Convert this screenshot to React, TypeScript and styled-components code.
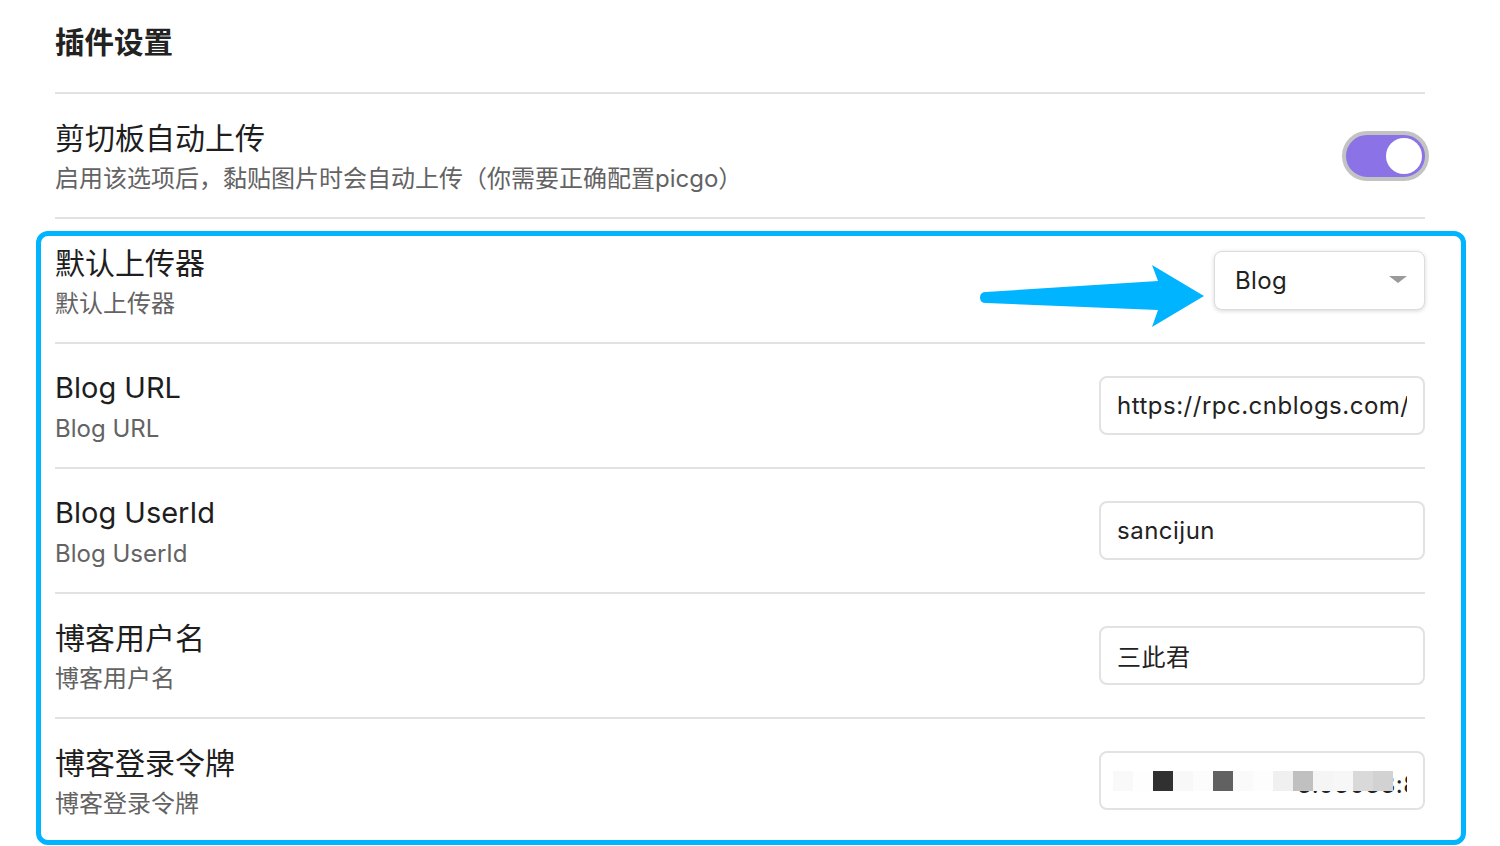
import React from "react";
import styled, { createGlobalStyle } from "styled-components";

const GlobalStyle = createGlobalStyle`
  html, body { margin: 0; padding: 0; background: #ffffff; }
  body {
    font-family: Inter, "Noto Sans CJK SC", "Noto Sans", sans-serif;
    color: #1f1f1f;
  }
  * { box-sizing: border-box; }
`;

const Page = styled.div`
  position: relative;
  width: 1500px;
  height: 846px;
  overflow: hidden;
  padding: 0 75px 0 55px;
`;

const Header = styled.div`
  height: 92px;
  display: flex;
  align-items: center;
  padding-bottom: 8px;
`;

const PageTitle = styled.h1`
  margin: 0;
  font-size: 29.5px;
  font-weight: 700;
  color: #222222;
  line-height: 40px;
`;

const Row = styled.div`
  height: 125px;
  border-top: 2px solid #e2e2e2;
  display: flex;
  align-items: center;
  justify-content: space-between;
`;

const Info = styled.div`
  display: flex;
  flex-direction: column;
  padding-top: 2px;
`;

const Name = styled.div<{ $cjk?: boolean }>`
  font-size: ${(p) => (p.$cjk ? "30px" : "29px")};
  line-height: 44px;
  color: #1e1e1e;
`;

const Desc = styled.div`
  font-size: 24px;
  line-height: 38px;
  color: #636363;
`;

const Toggle = styled.div<{ $on: boolean }>`
  position: relative;
  width: 87px;
  height: 50px;
  margin-right: -4px;
  border-radius: 25px;
  border: 4px solid #c3c3c3;
  background: ${(p) => (p.$on ? "#8b72e6" : "#e6e6e6")};
`;

const Knob = styled.div<{ $on: boolean }>`
  position: absolute;
  top: 3px;
  ${(p) => (p.$on ? "right: 3px;" : "left: 3px;")}
  width: 36px;
  height: 36px;
  border-radius: 50%;
  background: #ffffff;
`;

const Select = styled.div`
  width: 211px;
  height: 59px;
  border: 1px solid #dcdcdc;
  border-radius: 8px;
  box-shadow: 0 1px 4px rgba(0, 0, 0, 0.16);
  display: flex;
  align-items: center;
  justify-content: space-between;
  padding: 0 17px 0 20px;
  font-size: 24px;
  letter-spacing: 0.4px;
  color: #222222;
  background: #fff;
`;

const Caret = styled.span`
  width: 0;
  height: 0;
  border-left: 9px solid transparent;
  border-right: 9px solid transparent;
  border-top: 7px solid #9a9a9a;
  margin-top: -2px;
`;

const FieldWrap = styled.div`
  position: relative;
  width: 326px;
  height: 59px;
`;

const TextInput = styled.input<{ $masked?: boolean }>`
  width: 100%;
  height: 100%;
  border: 2px solid #e2e2e2;
  border-radius: 8px;
  padding: ${(p) => (p.$masked ? "8px 16px 0 196px" : "0 16px")};
  font-family: Inter, "Noto Sans CJK SC", "Noto Sans", sans-serif;
  font-size: 24px;
  letter-spacing: 0.5px;
  color: #222222;
  background: #fff;
  outline: none;
`;

const Mosaic = styled.div`
  position: absolute;
  left: 14px;
  top: 20px;
  display: flex;
`;

const Cell = styled.span<{ $c: string }>`
  width: 20px;
  height: 20px;
  background: ${(p) => p.$c};
`;

const Highlight = styled.div`
  position: absolute;
  left: 36px;
  top: 231px;
  width: 1430px;
  height: 614px;
  border: 5px solid #00b4ff;
  border-radius: 12px;
  pointer-events: none;
`;

const ArrowSvg = styled.svg`
  position: absolute;
  left: 0;
  top: 0;
  pointer-events: none;
`;

const mosaicColors = [
  "#f9f9f9", "#fefefe", "#303030", "#f8f8f8", "#fcfcfc", "#616161", "#fafafa",
  "#fdfdfd", "#f0f0f0", "#c0c0c0", "#f5f5f5", "#f7f7f7", "#d9d9d9", "#d2d2d2",
];

const fields = [
  { name: "Blog URL", desc: "Blog URL", value: "https://rpc.cnblogs.com/metaweblog/sancijun", cjk: false },
  { name: "Blog UserId", desc: "Blog UserId", value: "sancijun", cjk: false },
  { name: "博客用户名", desc: "博客用户名", value: "三此君", cjk: true },
];

export default function App() {
  return (
    <>
      <GlobalStyle />
      <Page>
        <Header>
          <PageTitle>插件设置</PageTitle>
        </Header>
        <Row>
          <Info>
            <Name $cjk>剪切板自动上传</Name>
            <Desc>启用该选项后，黏贴图片时会自动上传（你需要正确配置picgo）</Desc>
          </Info>
          <Toggle $on>
            <Knob $on />
          </Toggle>
        </Row>
        <Row>
          <Info>
            <Name $cjk>默认上传器</Name>
            <Desc>默认上传器</Desc>
          </Info>
          <Select>
            <span>Blog</span>
            <Caret />
          </Select>
        </Row>
        {fields.map((f) => (
          <Row key={f.name}>
            <Info>
              <Name $cjk={f.cjk}>{f.name}</Name>
              <Desc>{f.desc}</Desc>
            </Info>
            <FieldWrap>
              <TextInput readOnly value={f.value} />
            </FieldWrap>
          </Row>
        ))}
        <Row>
          <Info>
            <Name $cjk>博客登录令牌</Name>
            <Desc>博客登录令牌</Desc>
          </Info>
          <FieldWrap>
            <TextInput $masked readOnly value="3.03033:8a" />
            <Mosaic>
              {mosaicColors.map((c, i) => (
                <Cell key={i} $c={c} />
              ))}
            </Mosaic>
          </FieldWrap>
        </Row>
        <Highlight />
        <ArrowSvg width="1500" height="846" viewBox="0 0 1500 846">
          <path
            d="M986,292 L1158,281 L1152,265 L1204,296 L1152,327 L1158,310 L986,303 Q980,303 980,297.5 Q980,292 986,292 Z"
            fill="#00b4ff"
          />
        </ArrowSvg>
      </Page>
    </>
  );
}
